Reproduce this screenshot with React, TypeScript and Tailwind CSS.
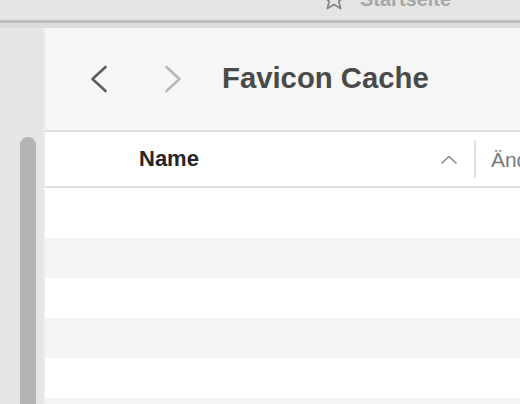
import React from "react";

export default function App() {
  const rows = [0, 1, 2, 3, 4, 5];
  return (
    <div
      className="w-[520px] h-[404px] overflow-hidden flex flex-col bg-white"
      style={{ fontFamily: '"Liberation Sans", Arial, sans-serif' }}
    >
      {/* top browser bar */}
      <div className="h-[20px] shrink-0 bg-[#e4e4e4] relative overflow-hidden">
        <div className="absolute left-[322px] top-[-12px] flex items-center gap-[14px]">
          <svg width="24" height="22" viewBox="0 0 24 22" fill="none" stroke="#8a8a8a" strokeWidth="1.8" strokeLinejoin="round">
            <path d="M12 1 L15 8 L22.5 8.5 L16.8 13.3 L18.6 20.6 L12 16.6 L5.4 20.6 L7.2 13.3 L1.5 8.5 L9 8 Z" />
          </svg>
          <span className="text-[20px] text-[#a8a8a8] leading-none font-bold">Startseite</span>
        </div>
      </div>
      <div className="h-[3px] shrink-0 bg-[#bdbdbd]" />
      <div className="h-[5px] shrink-0 bg-[#dcdcdc]" />
      <div className="flex-1 flex min-h-0">
        {/* left sidebar */}
        <div className="w-[43px] shrink-0 bg-[#e4e5e4] flex flex-col pl-[20px] pt-[109px]">
          <div className="w-[16px] flex-1 rounded-t-full bg-[#b3b4b3]" />
        </div>
        <div className="w-[2px] shrink-0 bg-[#ebebeb]" />
        {/* main */}
        <div className="flex-1 flex flex-col min-w-0 overflow-hidden">
          <div className="h-[104px] shrink-0 bg-[#f5f6f5] flex items-center border-b-2 border-[#dedede]">
            <svg className="ml-[45px] shrink-0" width="18" height="28" viewBox="0 0 18 28" fill="none" stroke="#5e5e5e" strokeWidth="2.6" strokeLinecap="round" strokeLinejoin="round">
              <path d="M15.5 2 L2.5 14 L15.5 26" />
            </svg>
            <svg className="ml-[56px] shrink-0" width="18" height="28" viewBox="0 0 18 28" fill="none" stroke="#b8b8b8" strokeWidth="2.6" strokeLinecap="round" strokeLinejoin="round">
              <path d="M2.5 2 L15.5 14 L2.5 26" />
            </svg>
            <span className="ml-[40px] text-[29.3px] font-bold text-[#4a4a4a] leading-none mt-[-2px] whitespace-nowrap">Favicon Cache</span>
          </div>
          <div className="h-[56px] shrink-0 bg-white flex items-center border-b-2 border-[#e0e0e0]">
            <span className="ml-[94px] shrink-0 text-[22px] font-bold text-[#262626] leading-none">Name</span>
            <svg className="ml-[242px] shrink-0" width="16" height="9" viewBox="0 0 16 9" fill="none" stroke="#8a8a8a" strokeWidth="1.6" strokeLinecap="round" strokeLinejoin="round">
              <path d="M1 8 L8 1.5 L15 8" />
            </svg>
            <div className="ml-[17px] shrink-0 w-[2px] h-[38px] bg-[#e2e2e2]" />
            <span className="ml-[15px] shrink-0 text-[21px] text-[#7a7a7a] leading-none whitespace-nowrap">Änderungsdatum</span>
          </div>
          <div className="flex-1 flex flex-col pt-[10px]">
            {rows.map((i) => (
              <div key={i} className={`h-[40px] shrink-0 ${i % 2 === 1 ? "bg-[#f3f4f3]" : "bg-white"}`} />
            ))}
          </div>
        </div>
      </div>
    </div>
  );
}
